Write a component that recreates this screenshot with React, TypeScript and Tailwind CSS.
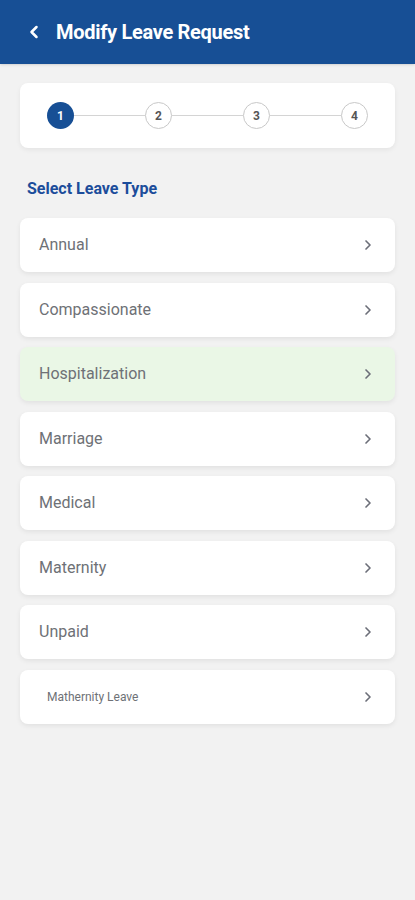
import { ChevronLeft, ChevronRight } from 'lucide-react';

const leaveTypes = [
  { label: 'Annual' },
  { label: 'Compassionate' },
  { label: 'Hospitalization', active: true },
  { label: 'Marriage' },
  { label: 'Medical' },
  { label: 'Maternity' },
  { label: 'Unpaid' },
  { label: 'Mathernity Leave', small: true },
];

export default function App() {
  return (
    <div className="min-h-[900px] bg-[#f2f2f2] font-['Roboto',sans-serif]">
      {/* Header */}
      <div className="h-16 bg-[#174f95] flex items-center pl-[24px] gap-[12px] shadow-sm">
        <ChevronLeft className="w-5 h-5 text-white" strokeWidth={3} />
        <h1 className="text-white text-[20px] font-bold tracking-[-0.3px]">Modify Leave Request</h1>
      </div>

      {/* Stepper */}
      <div className="mx-5 mt-[19px] bg-white rounded-lg h-[65px] flex items-center px-[27px] shadow-[0_2px_5px_rgba(0,0,0,0.06)]">
        {[1, 2, 3, 4].map((n, i) => (
          <div key={n} className={`flex items-center ${i < 3 ? 'flex-1' : ''}`}>
            <div
              className={`w-[27px] h-[27px] rounded-full flex items-center justify-center text-[12px] font-bold shrink-0 ${
                n === 1 ? 'bg-[#174f95] text-white' : 'bg-white border border-[#c8c8c8] text-[#555]'
              }`}
            >
              {n}
            </div>
            {i < 3 && <div className="flex-1 h-px bg-[#d4d4d4]" />}
          </div>
        ))}
      </div>

      <h2 className="mt-[29px] ml-[27px] text-[16px] font-bold text-[#1c4d9b]">Select Leave Type</h2>

      {/* Leave type list */}
      <div className="mx-5 mt-[17px] flex flex-col gap-[10.5px]">
        {leaveTypes.map((t) => (
          <div
            key={t.label}
            className={`h-[54px] rounded-lg flex items-center justify-between pr-[19px] shadow-[0_2px_5px_rgba(0,0,0,0.07)] ${
              t.active ? 'bg-[#eaf7e6]' : 'bg-white'
            } ${t.small ? 'pl-[27px]' : 'pl-[19px]'}`}
          >
            <span className={`text-[#6e7176] ${t.small ? 'text-[12px]' : 'text-[16px]'}`}>{t.label}</span>
            <ChevronRight className="w-4 h-4 text-[#6b6e78]" strokeWidth={2.5} />
          </div>
        ))}
      </div>
    </div>
  );
}
